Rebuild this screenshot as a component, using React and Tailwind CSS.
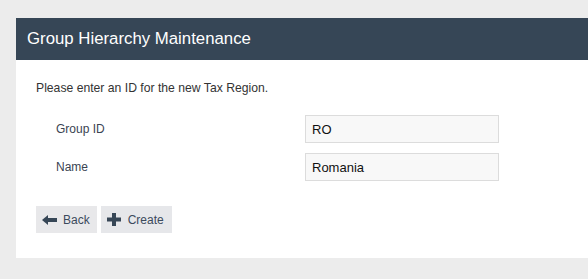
export default function App() {
  return (
    <div className="min-h-screen bg-[#ececec] pt-[18px] pl-4 font-['Liberation_Sans',Arial,sans-serif]">
      <div className="bg-white pb-[25px]">
        {/* Header */}
        <div className="h-[42px] bg-[#364656] px-[11px] flex items-center">
          <h1 className="text-[16.8px] text-white leading-none">Group Hierarchy Maintenance</h1>
        </div>

        <div className="px-5 pt-[21px]">
          <p className="text-[12.2px] leading-[14px] text-[#333]">Please enter an ID for the new Tax Region.</p>

          {/* Form */}
          <div className="mt-[20px] flex flex-col gap-[10px]">
            <div className="flex items-center">
              <label className="w-[269px] pl-5 text-[12px] text-[#3a4452]">Group ID</label>
              <input
                readOnly
                value="RO"
                className="w-[194px] h-[28px] border border-[#dcdcdc] bg-[#f8f8f8] px-[6px] text-[13px] text-[#111] outline-none"
              />
            </div>
            <div className="flex items-center">
              <label className="w-[269px] pl-5 text-[12px] text-[#3a4452]">Name</label>
              <input
                readOnly
                value="Romania"
                className="w-[194px] h-[28px] border border-[#dcdcdc] bg-[#f8f8f8] px-[6px] text-[13px] text-[#111] outline-none"
              />
            </div>
          </div>

          {/* Actions */}
          <div className="mt-[25px] flex gap-1">
            <button className="h-[27px] bg-[#e8e8ea] pl-[6px] pr-[7px] flex items-center gap-[6px] text-[12px] text-[#3b4a5c]">
              <svg width="15" height="10" viewBox="0 0 15 10" fill="#364656">
                <polygon points="0,5 6,0 6,10" />
                <rect x="5" y="3" width="10" height="4" />
              </svg>
              Back
            </button>
            <button className="h-[27px] bg-[#e6e7ea] pl-[6px] pr-[8px] flex items-center gap-[7px] text-[12px] text-[#3b4a5c]">
              <svg width="14" height="13" viewBox="0 0 14 13" fill="#364656">
                <rect x="5" y="0" width="4" height="13" />
                <rect x="0" y="4.5" width="14" height="4" />
              </svg>
              Create
            </button>
          </div>
        </div>
      </div>
    </div>
  );
}
